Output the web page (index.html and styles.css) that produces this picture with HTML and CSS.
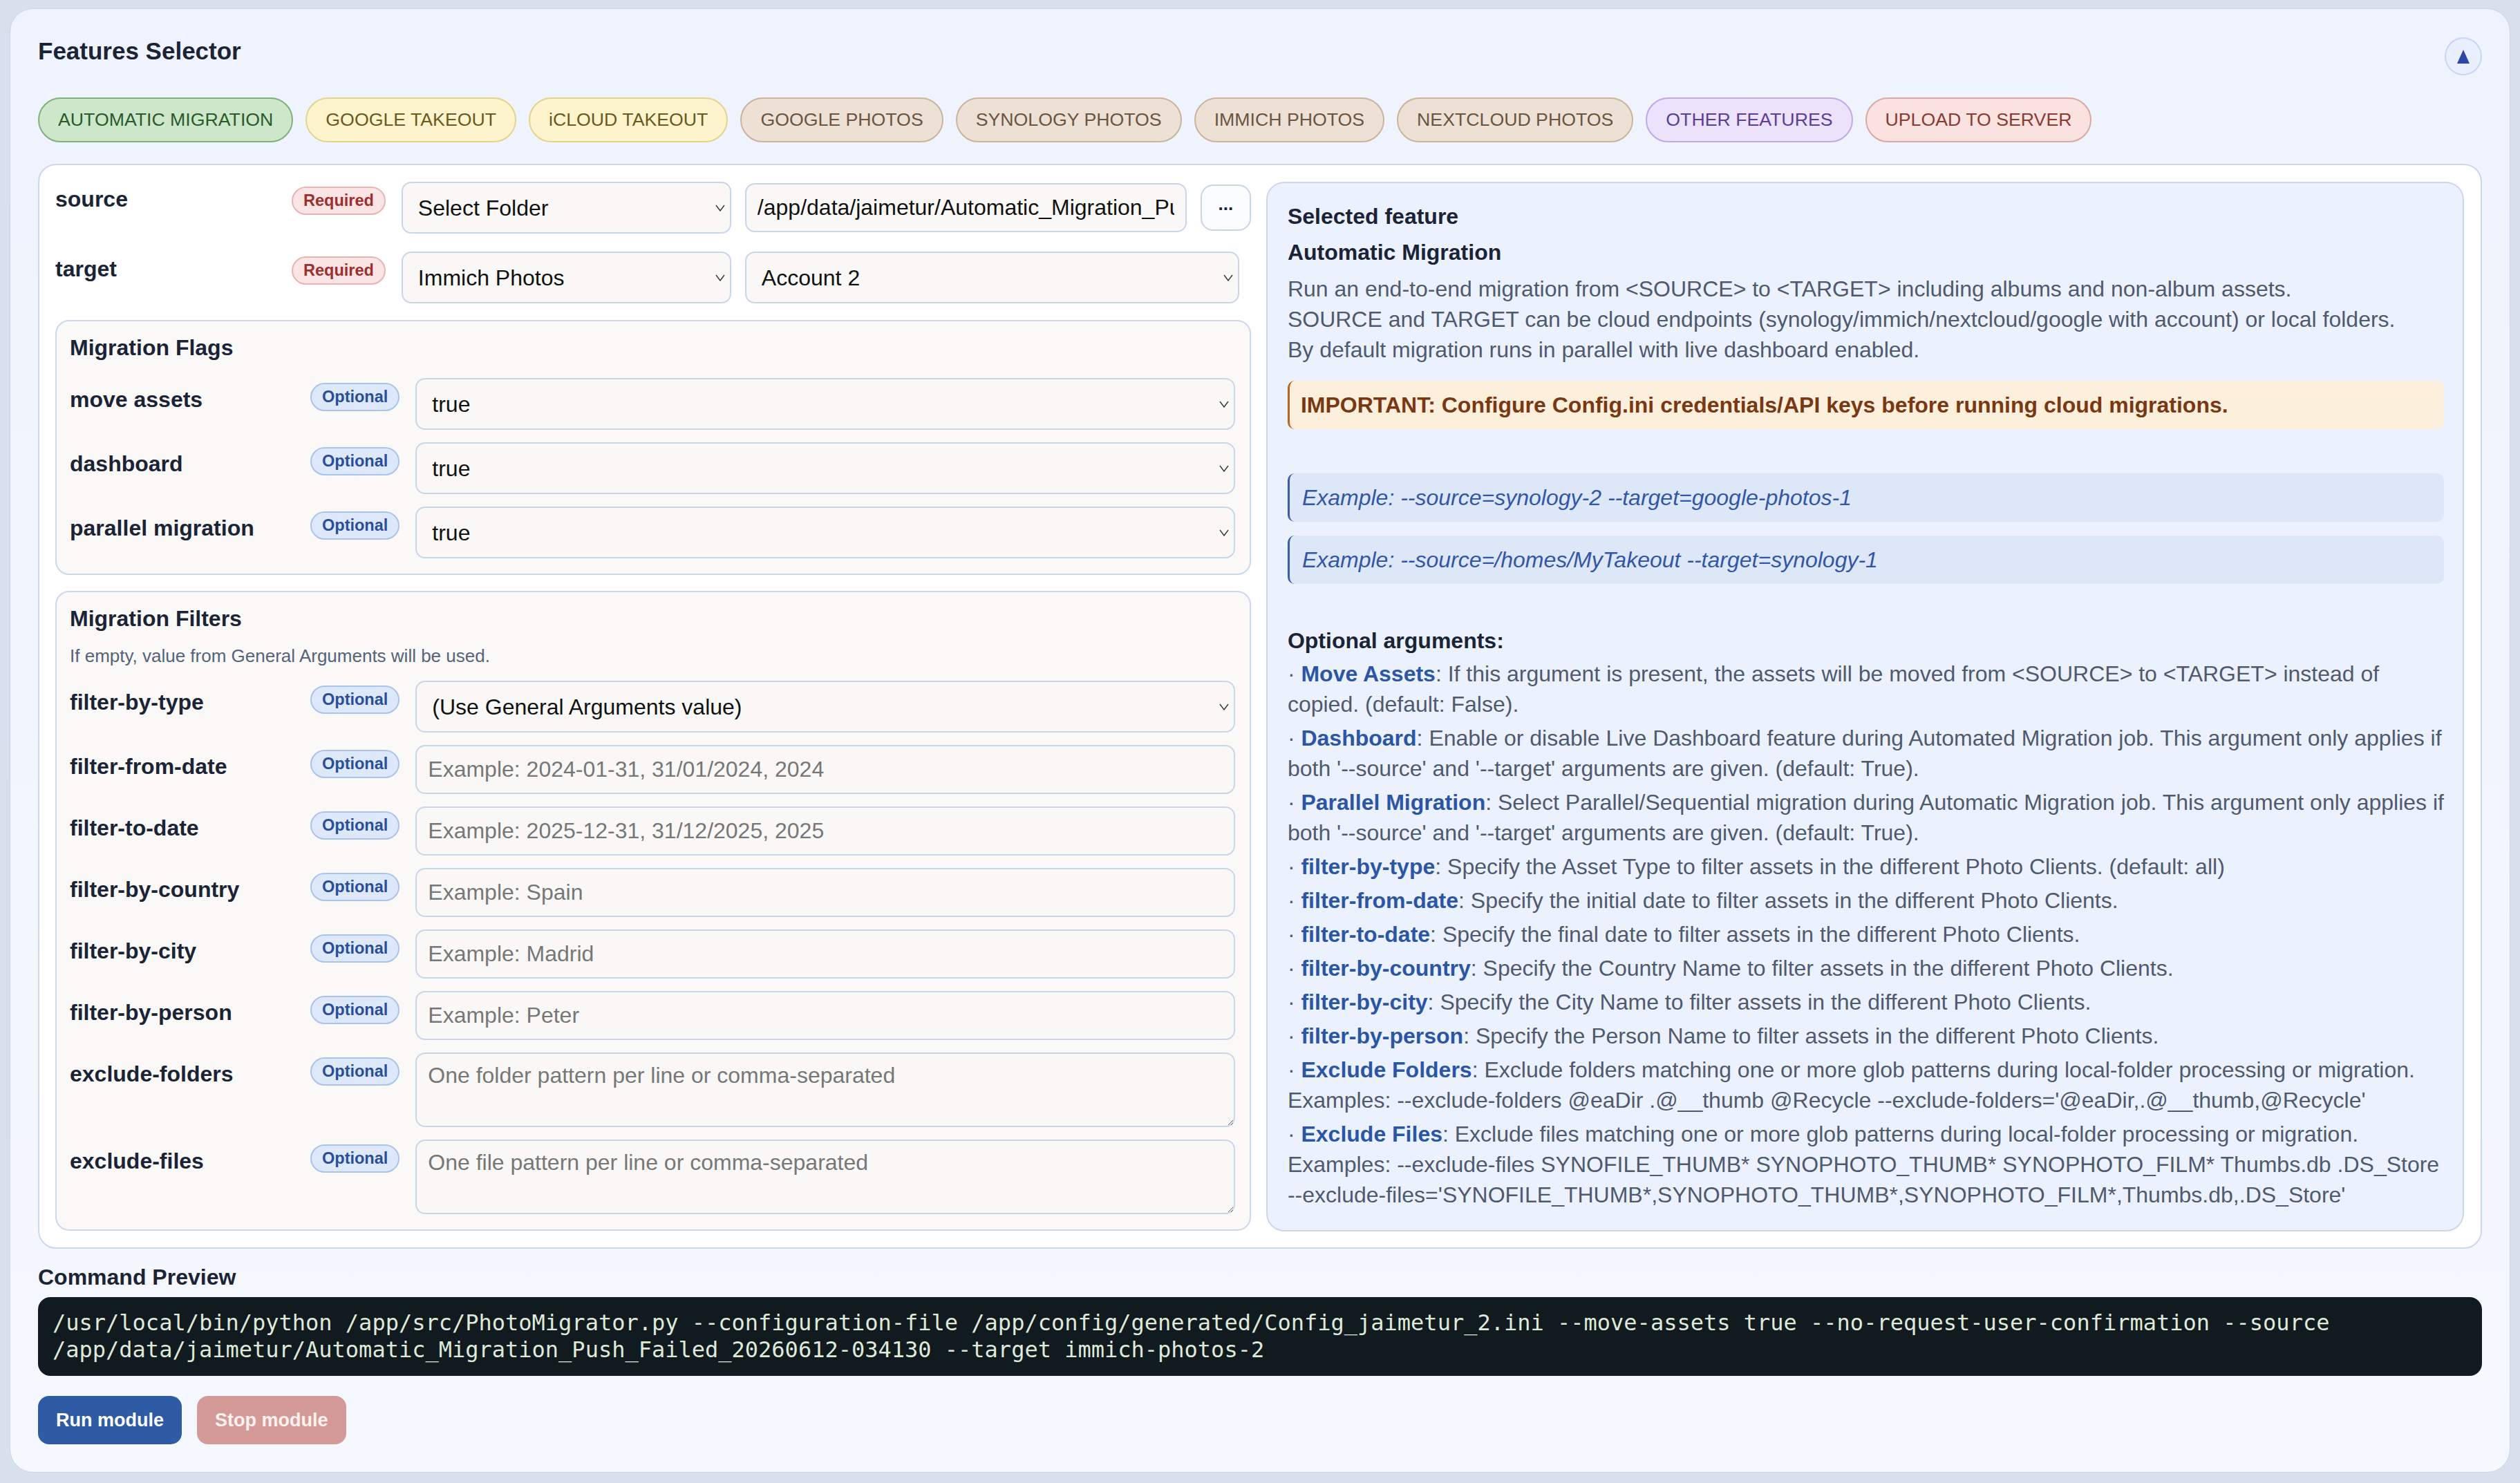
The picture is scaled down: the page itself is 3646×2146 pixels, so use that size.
FILE: index.html
```html
<!DOCTYPE html>
<html lang="en">
<head>
  <meta charset="UTF-8">
  <meta name="viewport" content="width=device-width, initial-scale=1.0">
  <title>PhotoMigrator - Features Selector</title>
  <link rel="stylesheet" href="styles.css">
</head>
<body>
  <div class="card">
    <!-- En-tête : titre + bouton replier -->
    <div class="card-head">
      <div class="card-title">Features Selector</div>
      <button class="collapse-btn" title="Collapse">
        <svg viewBox="0 0 20 20" width="20" height="20"><polygon points="10,0 19,20 1,20" fill="#2a47a6"/></svg>
      </button>
    </div>

    <!-- Onglets des fonctionnalités -->
    <div class="tabs">
      <button class="tab tab-green">AUTOMATIC MIGRATION</button>
      <button class="tab tab-yellow">GOOGLE TAKEOUT</button>
      <button class="tab tab-yellow">iCLOUD TAKEOUT</button>
      <button class="tab tab-brown">GOOGLE PHOTOS</button>
      <button class="tab tab-brown">SYNOLOGY PHOTOS</button>
      <button class="tab tab-brown">IMMICH PHOTOS</button>
      <button class="tab tab-brown">NEXTCLOUD PHOTOS</button>
      <button class="tab tab-purple">OTHER FEATURES</button>
      <button class="tab tab-red">UPLOAD TO SERVER</button>
    </div>

    <div class="panel">
      <!-- Colonne gauche : formulaire -->
      <div class="form-col">
        <div class="main-fields">
          <div class="field-row">
            <div class="field-label">source</div>
            <span class="badge badge-req">Required</span>
            <div class="control-group">
              <div class="select-box fixed">
                <select class="control"><option>Select Folder</option></select>
                <svg class="chev" viewBox="0 0 14 10" width="14" height="10"><path d="M1 1 L7 9 L13 1" fill="none" stroke="#333" stroke-width="1.4"/></svg>
              </div>
              <input class="control path-input" type="text" value="/app/data/jaimetur/Automatic_Migration_Push_Failed_20260612-034130">
              <button class="more-btn">...</button>
            </div>
          </div>
          <div class="field-row">
            <div class="field-label">target</div>
            <span class="badge badge-req">Required</span>
            <div class="control-group target-group">
              <div class="select-box fixed">
                <select class="control"><option>Immich Photos</option></select>
                <svg class="chev" viewBox="0 0 14 10" width="14" height="10"><path d="M1 1 L7 9 L13 1" fill="none" stroke="#333" stroke-width="1.4"/></svg>
              </div>
              <div class="select-box grow">
                <select class="control"><option>Account 2</option></select>
                <svg class="chev" viewBox="0 0 14 10" width="14" height="10"><path d="M1 1 L7 9 L13 1" fill="none" stroke="#333" stroke-width="1.4"/></svg>
              </div>
            </div>
          </div>
        </div>

        <!-- Bloc Migration Flags -->
        <div class="opt-box">
          <div class="box-title">Migration Flags</div>
          <div class="field-row">
            <div class="field-label">move assets</div>
            <span class="badge badge-opt">Optional</span>
            <div class="select-box">
              <select class="control"><option>true</option><option>false</option></select>
              <svg class="chev" viewBox="0 0 14 10" width="14" height="10"><path d="M1 1 L7 9 L13 1" fill="none" stroke="#333" stroke-width="1.4"/></svg>
            </div>
          </div>
          <div class="field-row">
            <div class="field-label">dashboard</div>
            <span class="badge badge-opt">Optional</span>
            <div class="select-box">
              <select class="control"><option>true</option><option>false</option></select>
              <svg class="chev" viewBox="0 0 14 10" width="14" height="10"><path d="M1 1 L7 9 L13 1" fill="none" stroke="#333" stroke-width="1.4"/></svg>
            </div>
          </div>
          <div class="field-row">
            <div class="field-label">parallel migration</div>
            <span class="badge badge-opt">Optional</span>
            <div class="select-box">
              <select class="control"><option>true</option><option>false</option></select>
              <svg class="chev" viewBox="0 0 14 10" width="14" height="10"><path d="M1 1 L7 9 L13 1" fill="none" stroke="#333" stroke-width="1.4"/></svg>
            </div>
          </div>
        </div>

        <!-- Bloc Migration Filters -->
        <div class="opt-box">
          <div class="box-title">Migration Filters</div>
          <div class="box-hint">If empty, value from General Arguments will be used.</div>
          <div class="field-row">
            <div class="field-label">filter-by-type</div>
            <span class="badge badge-opt">Optional</span>
            <div class="select-box">
              <select class="control"><option>(Use General Arguments value)</option></select>
              <svg class="chev" viewBox="0 0 14 10" width="14" height="10"><path d="M1 1 L7 9 L13 1" fill="none" stroke="#333" stroke-width="1.4"/></svg>
            </div>
          </div>
          <div class="field-row">
            <div class="field-label">filter-from-date</div>
            <span class="badge badge-opt">Optional</span>
            <input class="control" type="text" placeholder="Example: 2024-01-31, 31/01/2024, 2024">
          </div>
          <div class="field-row">
            <div class="field-label">filter-to-date</div>
            <span class="badge badge-opt">Optional</span>
            <input class="control" type="text" placeholder="Example: 2025-12-31, 31/12/2025, 2025">
          </div>
          <div class="field-row">
            <div class="field-label">filter-by-country</div>
            <span class="badge badge-opt">Optional</span>
            <input class="control" type="text" placeholder="Example: Spain">
          </div>
          <div class="field-row">
            <div class="field-label">filter-by-city</div>
            <span class="badge badge-opt">Optional</span>
            <input class="control" type="text" placeholder="Example: Madrid">
          </div>
          <div class="field-row">
            <div class="field-label">filter-by-person</div>
            <span class="badge badge-opt">Optional</span>
            <input class="control" type="text" placeholder="Example: Peter">
          </div>
          <div class="field-row">
            <div class="field-label">exclude-folders</div>
            <span class="badge badge-opt">Optional</span>
            <textarea class="control" placeholder="One folder pattern per line or comma-separated"></textarea>
          </div>
          <div class="field-row">
            <div class="field-label">exclude-files</div>
            <span class="badge badge-opt">Optional</span>
            <textarea class="control" placeholder="One file pattern per line or comma-separated"></textarea>
          </div>
        </div>
      </div>

      <!-- Colonne droite : description de la fonctionnalité -->
      <aside class="feature-info">
        <div class="info-kicker">Selected feature</div>
        <div class="info-title">Automatic Migration</div>
        <p class="info-desc">Run an end-to-end migration from &lt;SOURCE&gt; to &lt;TARGET&gt; including albums and non-album assets.<br>SOURCE and TARGET can be cloud endpoints (synology/immich/nextcloud/google with account) or local folders.<br>By default migration runs in parallel with live dashboard enabled.</p>
        <div class="note note-warn">IMPORTANT: Configure Config.ini credentials/API keys before running cloud migrations.</div>
        <div class="note note-example first">Example: --source=synology-2 --target=google-photos-1</div>
        <div class="note note-example">Example: --source=/homes/MyTakeout --target=synology-1</div>

        <div class="args-title">Optional arguments:</div>
        <ul class="args">
          <li>· <b>Move Assets</b>: If this argument is present, the assets will be moved from &lt;SOURCE&gt; to &lt;TARGET&gt; instead of<br>copied. (default: False).</li>
          <li>· <b>Dashboard</b>: Enable or disable Live Dashboard feature during Automated Migration job. This argument only applies if<br>both '--source' and '--target' arguments are given. (default: True).</li>
          <li>· <b>Parallel Migration</b>: Select Parallel/Sequential migration during Automatic Migration job. This argument only applies if<br>both '--source' and '--target' arguments are given. (default: True).</li>
          <li>· <b>filter-by-type</b>: Specify the Asset Type to filter assets in the different Photo Clients. (default: all)</li>
          <li>· <b>filter-from-date</b>: Specify the initial date to filter assets in the different Photo Clients.</li>
          <li>· <b>filter-to-date</b>: Specify the final date to filter assets in the different Photo Clients.</li>
          <li>· <b>filter-by-country</b>: Specify the Country Name to filter assets in the different Photo Clients.</li>
          <li>· <b>filter-by-city</b>: Specify the City Name to filter assets in the different Photo Clients.</li>
          <li>· <b>filter-by-person</b>: Specify the Person Name to filter assets in the different Photo Clients.</li>
          <li>· <b>Exclude Folders</b>: Exclude folders matching one or more glob patterns during local-folder processing or migration.<br>Examples: --exclude-folders @eaDir .@__thumb @Recycle --exclude-folders='@eaDir,.@__thumb,@Recycle'</li>
          <li>· <b>Exclude Files</b>: Exclude files matching one or more glob patterns during local-folder processing or migration.<br>Examples: --exclude-files SYNOFILE_THUMB* SYNOPHOTO_THUMB* SYNOPHOTO_FILM* Thumbs.db .DS_Store<br>--exclude-files='SYNOFILE_THUMB*,SYNOPHOTO_THUMB*,SYNOPHOTO_FILM*,Thumbs.db,.DS_Store'</li>
        </ul>
      </aside>
    </div>

    <!-- Aperçu de la commande -->
    <div class="cmd-title">Command Preview</div>
    <pre class="cmd-preview">/usr/local/bin/python /app/src/PhotoMigrator.py --configuration-file /app/config/generated/Config_jaimetur_2.ini --move-assets true --no-request-user-confirmation --source /app/data/jaimetur/Automatic_Migration_Push_Failed_20260612-034130 --target immich-photos-2</pre>

    <div class="actions">
      <button class="btn btn-run">Run module</button>
      <button class="btn btn-stop" disabled>Stop module</button>
    </div>
  </div>
</body>
</html>
```

FILE: styles.css
```css
/* Page de fond */
body {
  margin: 0;
  padding: 12px 14px 13px;
  background: #d7e0ec;
  font-family: "Liberation Sans", Arial, sans-serif;
  color: #1b2436;
}

/* Grande carte "Features Selector" */
.card {
  background: linear-gradient(180deg, #eef3fd, #f5f8fe);
  border: 1px solid #c9d7ee;
  border-radius: 34px;
  padding: 39px 40px 40px;
}

.card-head {
  display: flex;
  justify-content: space-between;
  align-items: flex-start;
}

.card-title {
  font-size: 35px;
  font-weight: 700;
  line-height: 44px;
}

.collapse-btn {
  width: 54px;
  height: 55px;
  margin-top: 2px;
  padding: 0;
  border-radius: 50%;
  border: 2px solid #c8d5f6;
  background: #e9effd;
  display: flex;
  align-items: center;
  justify-content: center;
  cursor: pointer;
}

/* Onglets en forme de pilule */
.tabs {
  display: flex;
  gap: 18px;
  margin-top: 32px;
}

.tab {
  font-family: inherit;
  font-size: 26.7px;
  line-height: 31px;
  padding: 15px 27px;
  border: 2px solid;
  border-radius: 999px;
  cursor: pointer;
}

.tab-green { background: #cce7c9; border-color: #80b07b; color: #2d5a29; }
.tab-yellow { background: #fdf3cc; border-color: #e5d38d; color: #6a5a1d; }
.tab-brown { background: #ece1d4; border-color: #c9b49c; color: #6b5542; }
.tab-purple { background: #ece2fc; border-color: #bea8e9; color: #5b3f95; }
.tab-red { background: #f9e2df; border-color: #dca7a1; color: #8a3a33; }

/* Panneau blanc avec deux colonnes */
.panel {
  margin-top: 31px;
  background: #fff;
  border: 2px solid #cbd8ec;
  border-radius: 26px;
  padding: 24px 24px 23px 23px;
  display: grid;
  grid-template-columns: 1fr 1fr;
  column-gap: 22px;
}

/* Lignes label / badge / champ */
.field-row {
  display: grid;
  grid-template-columns: 319px auto 1fr;
  column-gap: 23px;
  align-items: start;
}

.main-fields .field-row + .field-row {
  margin-top: 26px;
}

.field-label {
  font-size: 32px;
  font-weight: 700;
  line-height: 44px;
  padding-top: 9px;
}

.main-fields .field-label {
  padding-top: 3px;
}

.badge {
  margin-top: 7px;
  font-size: 23.5px;
  font-weight: 700;
  line-height: 27px;
  padding: 5px 15px;
  border: 2px solid;
  border-radius: 999px;
}

.badge-req { background: #fbe4e4; border-color: #e8b4b4; color: #9b3030; }
.badge-opt { background: #dde9fb; border-color: #aac3ec; color: #2a4f96; }

/* Champs de saisie */
.control {
  box-sizing: border-box;
  width: 100%;
  height: 75px;
  border: 2px solid #c9d6ea;
  border-radius: 14px;
  background: #f9f8f6;
  font-family: inherit;
  font-size: 32px;
  color: #111;
  padding: 0 44px 0 22px;
  appearance: none;
  -webkit-appearance: none;
}

input.control {
  height: 71px;
  padding: 0 16px;
}

textarea.control {
  height: 108px;
  padding: 13px 16px;
  line-height: 37px;
  resize: vertical;
}

.control::placeholder {
  color: #777;
}

.select-box {
  position: relative;
  min-width: 0;
}

.select-box .chev {
  position: absolute;
  right: 9px;
  top: 50%;
  margin-top: -5px;
  pointer-events: none;
}

.control-group {
  display: flex;
  gap: 20px;
  align-items: center;
}

.control-group .fixed {
  flex: 0 0 477px;
}

.control-group .grow,
.control-group .path-input {
  flex: 1;
  min-width: 0;
}

.path-input {
  height: 73px;
}

.target-group {
  margin-right: 17px;
}

.more-btn {
  flex: 0 0 73px;
  height: 67px;
  border: 2px solid #c9d6ea;
  border-radius: 18px;
  background: #fbfcff;
  font-family: inherit;
  font-size: 26px;
  font-weight: 700;
  color: #1b2436;
  padding: 0 0 10px;
  cursor: pointer;
}

/* Boîtes Flags / Filters */
.opt-box {
  border: 2px solid #cbd8ec;
  border-radius: 20px;
  background: #faf9f7;
  padding: 16px 21px 22px 19px;
  margin-top: 24px;
}

.opt-box + .opt-box {
  margin-top: 23px;
}

.opt-box .field-row {
  grid-template-columns: 325px auto 1fr;
}

.opt-box .field-row + .field-row {
  margin-top: 18px;
}

.box-title {
  font-size: 32px;
  font-weight: 700;
  line-height: 44px;
  margin-bottom: 22px;
}

.box-hint {
  font-size: 26px;
  line-height: 34px;
  color: #56627a;
  margin: -7px 0 19px;
}

/* Colonne de droite : description */
.feature-info {
  background: #ebf1fd;
  border: 2px solid #cbd8ec;
  border-radius: 26px;
  padding: 26px 27px 29px 29px;
  font-size: 32px;
  line-height: 44px;
}

.info-kicker,
.info-title,
.args-title {
  font-weight: 700;
  color: #1b2436;
}

.info-title {
  margin-top: 8px;
}

.info-desc {
  margin: 9px 0 0;
  color: #4f5a6e;
}

.note {
  border-left: 3px solid;
  border-radius: 10px;
  padding: 13px 18px;
}

.note-warn {
  margin-top: 23px;
  background: #fcefdc;
  border-color: #b8641f;
  color: #7a3812;
  font-weight: 700;
  padding-left: 16px;
}

.note-example {
  margin-top: 20px;
  background: #dee7f8;
  border-color: #3a5ca6;
  color: #3157a6;
  font-style: italic;
}

.note-example.first {
  margin-top: 64px;
}

.args-title {
  margin-top: 60px;
}

.args {
  list-style: none;
  margin: 4px 0 0;
  padding: 0;
  color: #4f5a6e;
  white-space: nowrap;
}

.args li + li {
  margin-top: 5px;
}

.args b {
  color: #2b56a5;
}

/* Aperçu de la commande */
.cmd-title {
  margin-top: 19px;
  font-size: 32px;
  font-weight: 700;
  line-height: 44px;
}

.cmd-preview {
  margin: 7px 0 0;
  background: #111a1f;
  color: #dfe9da;
  border-radius: 18px;
  padding: 18px 21px;
  font-family: "DejaVu Sans Mono", "Liberation Mono", monospace;
  font-size: 32px;
  line-height: 39px;
  white-space: pre-wrap;
  word-break: break-word;
}

/* Boutons du bas */
.actions {
  display: flex;
  gap: 22px;
  margin-top: 29px;
}

.btn {
  font-family: inherit;
  font-size: 27px;
  font-weight: 700;
  line-height: 31px;
  padding: 19.5px 26px;
  border: 0;
  border-radius: 16px;
  color: #fff;
  cursor: pointer;
}

.btn-run { background: #2f5ba4; }
.btn-stop { background: #d49a98; color: #fdf1f0; cursor: default; }
```
